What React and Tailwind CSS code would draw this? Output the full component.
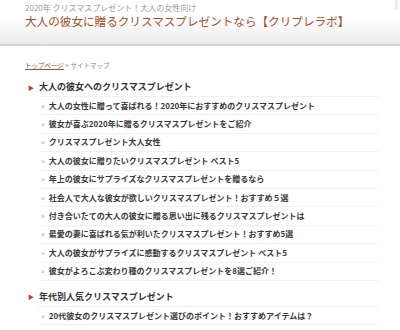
import React from 'react';

const giftPosts = [
  '大人の女性に贈って喜ばれる！2020年におすすめのクリスマスプレゼント',
  '彼女が喜ぶ2020年に贈るクリスマスプレゼントをご紹介',
  'クリスマスプレゼント大人女性',
  '大人の彼女に贈りたいクリスマスプレゼント ベスト5',
  '年上の彼女にサプライズなクリスマスプレゼントを贈るなら',
  '社会人で大人な彼女が欲しいクリスマスプレゼント！おすすめ５選',
  '付き合いたての大人の彼女に贈る思い出に残るクリスマスプレゼントは',
  '最愛の妻に喜ばれる気が利いたクリスマスプレゼント！おすすめ5選',
  '大人の彼女がサプライズに感動するクリスマスプレゼント ベスト5',
  '彼女がよろこぶ変わり種のクリスマスプレゼントを8選ご紹介！',
];

const agePosts = ['20代彼女のクリスマスプレゼント選びのポイント！おすすめアイテムは？'];

function Section({ title, posts, className = '' }) {
  return (
    <section className={className}>
      <h2 className="flex h-[18px] items-center text-[9px] font-bold text-[#333]">
        <span className="mr-[5px] ml-[3px] text-[6px] text-[#c0392b]">▶</span>
        {title}
      </h2>
      <ul className="ml-[14px] w-[339px] border-b border-[#f0f0f0]">
        {posts.map((post) => (
          <li key={post} className="flex h-[18.4px] items-center border-t border-[#f0f0f0] pl-[2px] text-[8px] font-bold text-[#3a3a3a]">
            <span className="mr-[4px] text-[8px] font-normal text-[#aaa]">»</span>
            {post}
          </li>
        ))}
      </ul>
    </section>
  );
}

export default function App() {
  return (
    <div className="relative h-[330px] w-[400px] overflow-hidden bg-white" style={{ fontFamily: '"Noto Sans CJK JP", "Noto Sans", sans-serif' }}>
      <header className="h-[46px] border-b-2 border-[#d6d6d6] bg-gradient-to-b from-white from-40% to-[#ebebeb] pl-[25px]">
        <p className="pt-[2px] text-[8px] leading-[11px] text-[#9a9a9a]">2020年 クリスマスプレゼント！大人の女性向け</p>
        <h1 className="text-[11.6px] leading-[16px] text-[#a0502c]">大人の彼女に贈るクリスマスプレゼントなら【クリプレラボ】</h1>
      </header>
      <div className="absolute right-[2px] top-0 h-[10px] w-[3px] bg-[#ececec]" />

      <main className="px-[25px]">
        <nav className="mt-[14px] text-[6.5px] leading-[10px] text-[#888]">
          <span className="text-[#a0502c] underline">トップページ</span> &gt; サイトマップ
        </nav>
        <Section title="大人の彼女へのクリスマスプレゼント" posts={giftPosts} className="mt-[8px]" />
        <Section title="年代別人気クリスマスプレゼント" posts={agePosts} className="mt-[7px]" />
      </main>
    </div>
  );
}
